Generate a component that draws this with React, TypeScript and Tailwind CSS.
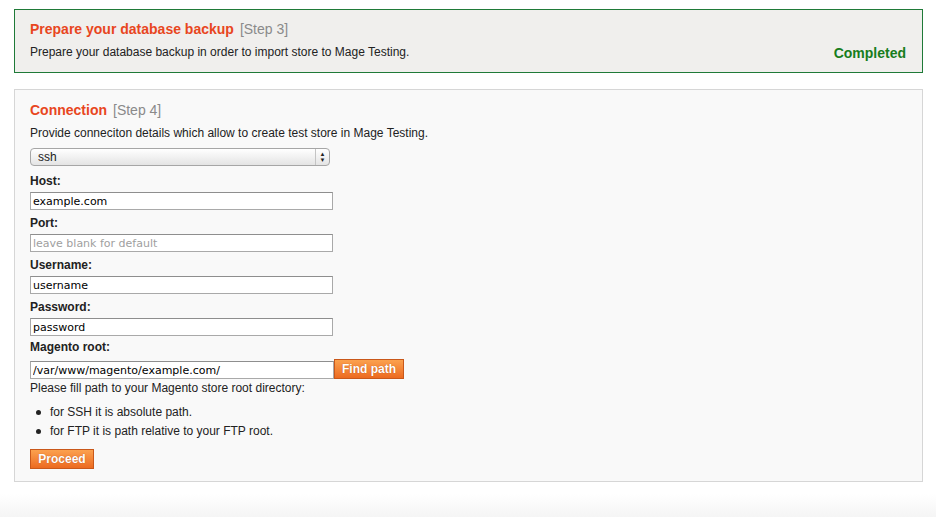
import React from 'react';

const sans = { fontFamily: '"Liberation Sans", Arial, sans-serif' };

const Field = ({ label, value, placeholder }: { label: string; value?: string; placeholder?: string }) => (
  <div>
    <div className="mt-[6px] mb-[3px] text-[12px] leading-[15px] font-bold text-[#222]">{label}</div>
    <input
      readOnly
      value={value ?? ''}
      placeholder={placeholder}
      className="block w-[303px] h-[18px] border border-[#a9a9a9] border-t-[#8e8e8e] bg-white px-[2px] text-[11px] text-black placeholder:text-[#a0a0a0] outline-none"
      style={{ fontFamily: '"DejaVu Sans", Verdana, sans-serif' }}
    />
  </div>
);

const OrangeButton = ({ children, className = '' }: { children: React.ReactNode; className?: string }) => (
  <button
    className={`h-[20px] border border-[#c9581a] bg-gradient-to-b from-[#fba14e] to-[#ec6a1f] text-[12px] font-bold leading-[18px] text-white [text-shadow:0_0_1px_#b14a10] ${className}`}
  >
    {children}
  </button>
);

export default function App() {
  return (
    <div className="min-h-[517px] bg-white text-[#222]" style={sans}>
      <div className="px-[14px] pt-[9px]">
        {/* Step 3 */}
        <div className="w-[909px] border border-[#1f7a38] bg-[#f0efed] px-[15px] pt-[10px] pb-[12px] flex items-end justify-between">
          <div>
            <div className="text-[14px] leading-[18px]">
              <span className="font-bold text-[#e8461e]">Prepare your database backup</span>
              <span className="ml-[6px] text-[#8a8a8a]">[Step 3]</span>
            </div>
            <div className="mt-[7px] text-[12px] leading-[15px]">
              Prepare your database backup in order to import store to Mage Testing.
            </div>
          </div>
          <div className="-mb-[2px] pr-[1px] text-[14px] font-bold leading-[18px] text-[#177d1c]">Completed</div>
        </div>

        {/* Step 4 */}
        <div className="mt-[16px] w-[909px] border border-[#d6d6d6] bg-[#f9f9f9] px-[15px] pt-[11px] pb-[11px]">
          <div className="text-[14px] leading-[18px]">
            <span className="font-bold text-[#e8461e]">Connection</span>
            <span className="ml-[6px] text-[#8a8a8a]">[Step 4]</span>
          </div>
          <div className="mt-[7px] text-[12px] leading-[15px]">
            Provide conneciton details which allow to create test store in Mage Testing.
          </div>

          <div className="mt-[7px] flex h-[18px] w-[300px] items-center rounded-[4px] border border-[#a6a6a6] bg-gradient-to-b from-[#ffffff] to-[#e4e4e4] text-[12px]">
            <span className="flex-1 pl-[7px] leading-[16px]">ssh</span>
            <span className="flex h-full w-[14px] flex-col items-center justify-center border-l border-[#c4c4c4] text-[6px] leading-[6px] text-[#222]">
              <span>▲</span>
              <span>▼</span>
            </span>
          </div>

          <div className="pt-[2px]">
            <Field label="Host:" value="example.com" />
            <Field label="Port:" placeholder="leave blank for default" />
            <Field label="Username:" value="username" />
            <Field label="Password:" value="password" />
          </div>

          <div className="mt-[4px] mb-[4px] text-[12px] leading-[15px] font-bold">Magento root:</div>
          <div className="flex items-end">
            <input
              readOnly
              value="/var/www/magento/example.com/"
              className="block w-[304px] h-[18px] border border-[#a9a9a9] border-t-[#8e8e8e] bg-white px-[2px] text-[11px] text-black outline-none"
              style={{ fontFamily: '"DejaVu Sans", Verdana, sans-serif' }}
            />
            <OrangeButton className="w-[70px]">Find path</OrangeButton>
          </div>
          <div className="mt-[2px] text-[12px] leading-[15px]">
            Please fill path to your Magento store root directory:
          </div>
          <ul className="mt-[7px] text-[12px] leading-[19px]">
            <li className="flex items-center">
              <span className="ml-[6px] mr-[9px] h-[5px] w-[5px] rounded-full bg-[#222]" />
              for SSH it is absolute path.
            </li>
            <li className="flex items-center">
              <span className="ml-[6px] mr-[9px] h-[5px] w-[5px] rounded-full bg-[#222]" />
              for FTP it is path relative to your FTP root.
            </li>
          </ul>
          <div className="mt-[5px]">
            <OrangeButton className="w-[64px]">Proceed</OrangeButton>
          </div>
        </div>
      </div>
      <div className="mt-[12px] h-[25px] bg-gradient-to-b from-white to-[#f4f4f4]" />
    </div>
  );
}
